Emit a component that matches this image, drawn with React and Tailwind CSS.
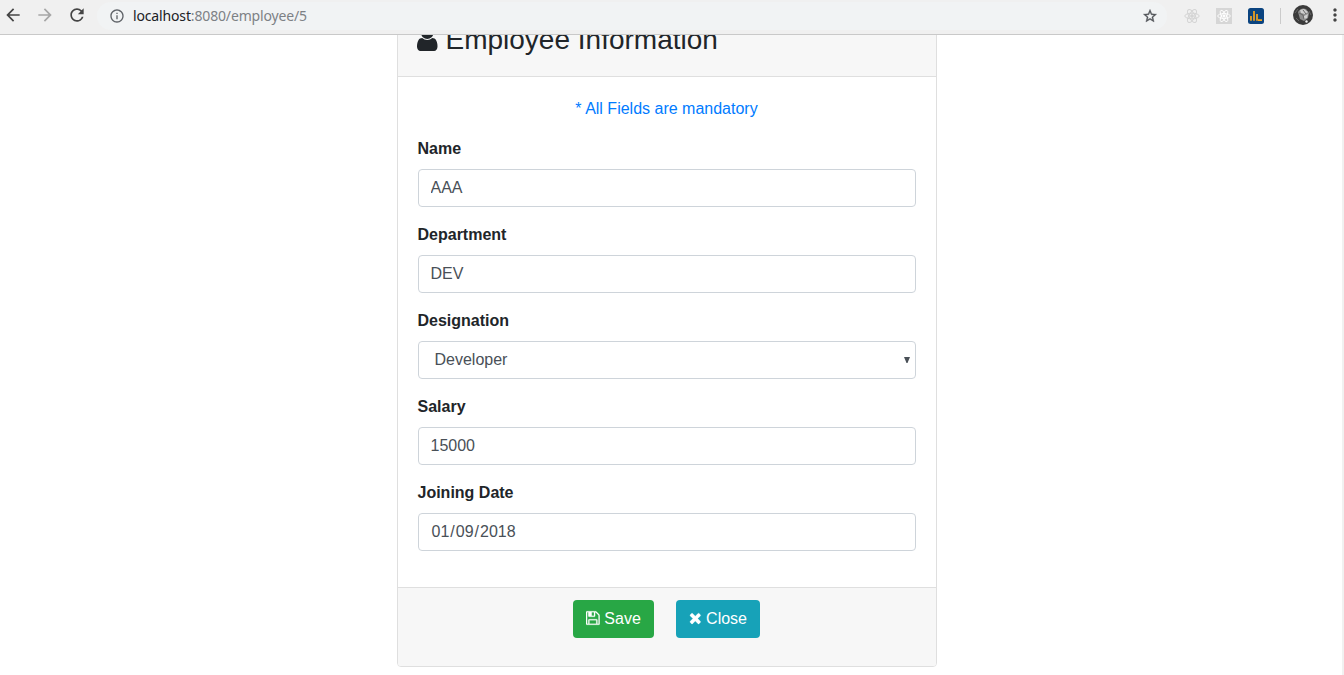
import React from "react";
import { MdArrowBack, MdArrowForward, MdRefresh, MdInfoOutline, MdMoreVert } from "react-icons/md";

const ReactLogo = ({ className }) => (
  <svg viewBox="0 0 16 16" className={className} fill="none" stroke="currentColor" strokeWidth="1">
    <ellipse cx="8" cy="8" rx="7.2" ry="2.8" />
    <ellipse cx="8" cy="8" rx="7.2" ry="2.8" transform="rotate(60 8 8)" />
    <ellipse cx="8" cy="8" rx="7.2" ry="2.8" transform="rotate(120 8 8)" />
    <circle cx="8" cy="8" r="1.3" fill="currentColor" />
  </svg>
);

const StarIcon = () => (
  <svg
    viewBox="0 0 24 24"
    className="mr-[9px] ml-auto size-4 text-[#505357]"
    fill="currentColor"
    stroke="currentColor"
    strokeWidth="0.5"
  >
    <path d="M22 9.24l-7.19-.62L12 2 9.19 8.63 2 9.24l5.46 4.73L5.82 21 12 17.27 18.18 21l-1.63-7.03L22 9.24zM12 15.4l-3.76 2.27 1-4.28-3.32-2.88 4.38-.38L12 6.1l1.71 4.04 4.38.38-3.32 2.88 1 4.28L12 15.4z" />
  </svg>
);

const UserIcon = () => (
  <svg viewBox="256 0 1280 1792" preserveAspectRatio="none" className="mb-0.5 -ml-[0.5px] h-7 w-[20.5px] shrink-0" fill="currentColor">
    <path d="M1536 1399q0 109-62.5 187t-150.5 78h-854q-88 0-150.5-78t-62.5-187q0-85 8.5-160.5t31.5-152 58.5-131 94-89 134.5-34.5q131 128 313 128t313-128q76 0 134.5 34.5t94 89 58.5 131 31.5 152 8.5 160.5zm-256-887q0 159-112.5 271.5t-271.5 112.5-271.5-112.5-112.5-271.5 112.5-271.5 271.5-112.5 271.5 112.5 112.5 271.5z" />
  </svg>
);

const SaveIcon = () => (
  <svg viewBox="128 0 1536 1792" className="mb-[2px] h-4 w-[13.7px] shrink-0" fill="currentColor" stroke="currentColor" strokeWidth="24">
    <path d="M512 1536h768v-384h-768v384zm896 0h128v-896q0-14-10-38.5t-20-34.5l-281-281q-10-10-34-20t-39-10v416q0 40-28 68t-68 28h-576q-40 0-68-28t-28-68v-416h-128v1280h128v-416q0-40 28-68t68-28h832q40 0 68 28t28 68v416zm-384-928v-320q0-13-9.5-22.5t-22.5-9.5h-192q-13 0-22.5 9.5t-9.5 22.5v320q0 13 9.5 22.5t22.5 9.5h192q13 0 22.5-9.5t9.5-22.5zm640 32v928q0 40-28 68t-68 28h-1344q-40 0-68-28t-28-68v-1344q0-40 28-68t68-28h928q40 0 88 20t76 48l280 280q28 28 48 76t20 88z" />
  </svg>
);

const CloseIcon = () => (
  <svg viewBox="192 0 1408 1792" className="mb-[2px] h-4 w-[12.6px] shrink-0" fill="currentColor" stroke="currentColor" strokeWidth="30">
    <path d="M1490 1322q0 40-28 68l-136 136q-28 28-68 28t-68-28l-294-294-294 294q-28 28-68 28t-68-28l-136-136q-28-28-28-68t28-68l294-294-294-294q-28-28-28-68t28-68l136-136q28-28 68-28t68 28l294 294 294-294q28-28 68-28t68 28l136 136q28 28 28 68t-28 68l-294 294 294 294q28 28 28 68z" />
  </svg>
);

const BrowserBar = () => (
  <header className="flex h-[35px] shrink-0 items-center border-b border-[#c9c9c9] bg-[#f0f0f0] pb-[3px] pl-[3px]">
    <MdArrowBack className="mb-px size-5 shrink-0 text-[#444]" />
    <MdArrowForward className="mb-px ml-3 size-5 shrink-0 text-[#a6a6a6]" />
    <MdRefresh className="mb-px ml-3 size-5 shrink-0 text-[#444]" />
    <div className="ml-[10px] flex h-7 w-[1070px] shrink-0 items-center rounded-full bg-[#f1f3f4] pt-px pl-3">
      <MdInfoOutline className="size-4 text-[#5f6368]" />
      <span className="ml-2 font-['Noto_Sans',sans-serif] text-[14px] leading-5 tracking-[-0.15px] text-[#7d8185]">
        <span className="text-[#202124]">localhost</span>:8080/employee/5
      </span>
      <StarIcon />
    </div>
    <ReactLogo className="ml-[17px] size-4 shrink-0 text-[#d4d4d4]" />
    <span className="ml-4 flex size-4 shrink-0 items-center justify-center bg-[#d6d6d6] text-white">
      <ReactLogo className="size-[14px]" />
    </span>
    <svg viewBox="0 0 16 16" className="ml-4 size-4 shrink-0">
      <rect width="16" height="16" rx="2.5" fill="#0b4480" />
      <path d="M3 12.8V8M6 12.8V3M9 12.8V6M10 12.2h4" stroke="#f5a31c" strokeWidth="1.7" fill="none" />
    </svg>
    <span className="ml-4 h-4 w-px shrink-0 bg-[#cbcbcb]" />
    <svg viewBox="0 0 20 20" className="mb-0.5 ml-3 size-5 shrink-0">
      <circle cx="10" cy="10" r="10" fill="#3b3b3b" />
      <path d="M5 7q3-5 8-3l3 4-1 5-4 3-4-2z" fill="#8f8f8f" />
      <path d="M7 5l4-1 4 3-3 2-4-1zM11 11l4-2-1 4-3 1z" fill="#d0d0d0" />
      <path d="M6 8l4 2 1 4M10 5l3 4M2 8l3-4M3 13l3 3M16 6l2 4" stroke="#666" fill="none" />
      <circle cx="13.5" cy="16.5" r="1.2" fill="#eee" />
    </svg>
    <MdMoreVert className="mb-px ml-3 size-5 shrink-0 text-[#444]" />
  </header>
);

const fieldClass =
  "block h-[38px] w-full rounded-[4px] border border-[#ced4da] bg-white px-3 text-base leading-6 text-[#495057] outline-none";

const Field = ({ label, children }) => (
  <div className="mb-4">
    <label className="mb-2 block leading-6 font-bold">{label}</label>
    {children}
  </div>
);

export default function App() {
  return (
    <div className="flex h-[675px] w-full flex-col overflow-hidden bg-white font-['Liberation_Sans',Arial,sans-serif] text-base text-[#212529]">
      <BrowserBar />
      <div className="flex min-h-0 flex-1 overflow-hidden">
        <main className="min-w-0 flex-1">
          <section className="-mt-[26px] ml-[396.5px] h-[658px] w-[540px] overflow-hidden rounded-[4px] border border-[#dfdfdf]">
            <div className="flex h-[67px] items-start border-b border-[#dfdfdf] bg-[#f7f7f7] px-5 pt-3">
              <h3 className="flex items-center pt-px text-[28px] leading-[33.6px] font-medium">
                <UserIcon />
                <span className="ml-2 font-normal">Employee Information</span>
              </h3>
            </div>
            <div className="px-5 py-5">
              <p className="mb-4 text-center leading-6 text-[#007bff]">* All Fields are mandatory</p>
              <Field label="Name">
                <input className={fieldClass} defaultValue="AAA" />
              </Field>
              <Field label="Department">
                <input className={fieldClass} defaultValue="DEV" />
              </Field>
              <Field label="Designation">
                <div className="flex h-[38px] w-full items-center justify-between rounded-[4px] border border-[#ced4da] bg-white pr-[5px] pl-4 text-[#495057]">
                  <span>Developer</span>
                  <svg viewBox="0 0 6 6" className="mb-px h-1.5 w-1.5" fill="#495057">
                    <path d="M0 0h6L3.5 6h-1z" />
                  </svg>
                </div>
              </Field>
              <Field label="Salary">
                <input className={fieldClass} defaultValue="15000" />
              </Field>
              <Field label="Joining Date">
                <div className="flex h-[38px] w-full items-center rounded-[4px] border border-[#ced4da] bg-white px-3 text-[#495057]">
                  <span className="px-px">01</span>/<span className="px-px">09</span>/
                  <span className="px-px">2018</span>
                </div>
              </Field>
            </div>
            <div className="flex h-[79px] items-start justify-center gap-[22px] border-t border-[#dfdfdf] bg-[#f7f7f7] pt-3 pr-px">
              <button className="flex h-[38px] w-[81px] items-center justify-center gap-[4.5px] rounded-[4px] bg-[#28a745] pl-px text-white">
                <SaveIcon />
                Save
              </button>
              <button className="flex h-[38px] w-[84px] items-center justify-center gap-[4.5px] rounded-[4px] bg-[#17a2b8] pl-px text-white">
                <CloseIcon />
                Close
              </button>
            </div>
          </section>
        </main>
        <div className="w-0.5 bg-[#f1f1f1]" />
      </div>
    </div>
  );
}
